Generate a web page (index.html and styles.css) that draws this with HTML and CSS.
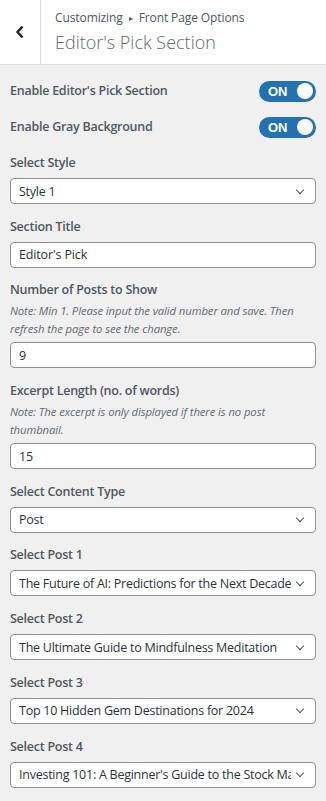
FILE: index.html
```html
<!DOCTYPE html>
<html lang="en">
<head>
  <meta charset="UTF-8" />
  <meta name="viewport" content="width=device-width, initial-scale=1.0" />
  <title>Editor's Pick Section</title>
  <link rel="stylesheet" href="styles.css">
</head>
<body>
  <div class="panel-header">
    <button class="back-btn" aria-label="Back">
      <svg width="10" height="14" viewBox="0 0 10 14"><path d="M7.5 1.5 L2.5 7 L7.5 12.5" fill="none" stroke="#1d2327" stroke-width="2.4"/></svg>
    </button>
    <div class="header-titles">
      <div class="crumb">Customizing <span class="sep">&#9656;</span> Front Page Options</div>
      <h1>Editor's Pick Section</h1>
    </div>
  </div>

  <div class="controls">
    <div class="toggle-row">
      <span class="label">Enable Editor's Pick Section</span>
      <span class="toggle"><span class="toggle-text">ON</span><span class="knob"></span></span>
    </div>
    <div class="toggle-row">
      <span class="label">Enable Gray Background</span>
      <span class="toggle"><span class="toggle-text">ON</span><span class="knob"></span></span>
    </div>

    <div class="control">
      <label class="label">Select Style</label>
      <div class="select"><span>Style 1</span><i class="chev"></i></div>
    </div>

    <div class="control">
      <label class="label">Section Title</label>
      <div class="input">Editor's Pick</div>
    </div>

    <div class="control">
      <label class="label">Number of Posts to Show</label>
      <p class="note">Note: Min 1. Please input the valid number and save. Then refresh the page to see the change.</p>
      <div class="input">9</div>
    </div>

    <div class="control">
      <label class="label">Excerpt Length (no. of words)</label>
      <p class="note">Note: The excerpt is only displayed if there is no post thumbnail.</p>
      <div class="input">15</div>
    </div>

    <div class="control">
      <label class="label">Select Content Type</label>
      <div class="select"><span>Post</span><i class="chev"></i></div>
    </div>

    <div class="control">
      <label class="label">Select Post 1</label>
      <div class="select"><span>The Future of AI: Predictions for the Next Decade</span><i class="chev"></i></div>
    </div>

    <div class="control">
      <label class="label">Select Post 2</label>
      <div class="select"><span>The Ultimate Guide to Mindfulness Meditation</span><i class="chev"></i></div>
    </div>

    <div class="control">
      <label class="label">Select Post 3</label>
      <div class="select"><span>Top 10 Hidden Gem Destinations for 2024</span><i class="chev"></i></div>
    </div>

    <div class="control">
      <label class="label">Select Post 4</label>
      <div class="select"><span>Investing 101: A Beginner's Guide to the Stock Market</span><i class="chev"></i></div>
    </div>
  </div>
</body>
</html>
```

FILE: styles.css
```css
body {
  margin: 0;
  background-color: #f0f0f1;
  font-family: 'Open Sans', 'Noto Sans', sans-serif;
  color: #2c3338;
}

/* header */
.panel-header {
  display: flex;
  height: 64px;
  background: white;
  border-bottom: 1px solid #dcdcde;
}

.back-btn {
  width: 41px;
  border: none;
  border-right: 1px solid #dcdcde;
  background: white;
  padding: 0;
  display: flex;
  align-items: center;
  justify-content: center;
}

.header-titles {
  padding: 9px 0 0 14px;
}

.crumb {
  font-size: 12px;
  line-height: 18px;
  letter-spacing: -0.1px;
  color: #50575e;
}

.crumb .sep {
  font-size: 8px;
  margin: 0 3px;
  position: relative;
  top: -1px;
}

h1 {
  margin: 0;
  font-size: 18px;
  font-weight: 300;
  line-height: 28px;
  color: #646970;
}

/* controls */
.controls {
  padding: 8px 10px 20px;
}

.label {
  display: block;
  font-size: 12.5px;
  font-weight: 600;
  letter-spacing: -0.25px;
  line-height: 20px;
  color: #50575e;
}

.toggle-row {
  display: flex;
  align-items: center;
  justify-content: space-between;
  height: 36px;
}

.toggle-row .label {
  display: inline;
}

.toggle {
  display: flex;
  align-items: center;
  justify-content: space-between;
  width: 57px;
  height: 21px;
  box-sizing: border-box;
  padding: 0 3px 0 9px;
  border-radius: 11px;
  background-color: #2271b1;
}

.toggle-text {
  font-family: 'Liberation Sans', Arial, sans-serif;
  font-weight: 700;
  font-size: 13px;
  color: white;
}

.knob {
  width: 16px;
  height: 16px;
  border-radius: 50%;
  background: white;
}

.control {
  margin-top: 8px;
}

.control + .control {
  margin-top: 12.7px;
}

.control .label {
  margin-bottom: 5px;
}

.note {
  margin: -3px 0 4px;
  font-size: 11.3px;
  font-style: italic;
  line-height: 18px;
  letter-spacing: -0.1px;
  color: #646970;
}

.input,
.select {
  display: flex;
  align-items: center;
  height: 26px;
  box-sizing: border-box;
  padding: 0 8px;
  background: white;
  border: 1px solid #8c8f94;
  border-radius: 4px;
  font-size: 12.5px;
  letter-spacing: -0.15px;
  color: #2c3338;
  overflow: hidden;
}

.select span {
  flex: 1;
  white-space: nowrap;
  overflow: hidden;
  letter-spacing: -0.25px;
}

.chev {
  flex: none;
  width: 5px;
  height: 5px;
  margin: 0 4px 3px 6px;
  border-right: 1.5px solid #50575e;
  border-bottom: 1.5px solid #50575e;
  transform: rotate(45deg);
}
```
